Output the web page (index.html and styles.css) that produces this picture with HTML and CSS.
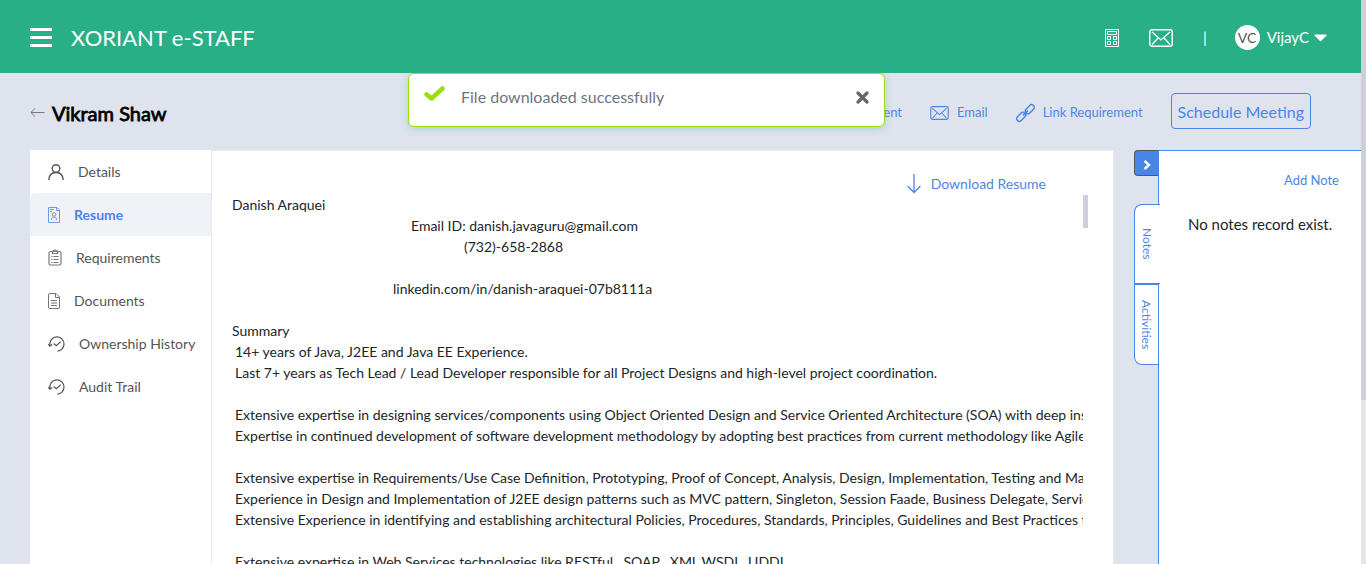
FILE: index.html
```html
<!DOCTYPE html>
<html lang="en">
<head>
<meta charset="utf-8">
<title>Xoriant e-Staff</title>
<link rel="stylesheet" href="styles.css">
</head>
<body>
<svg class="sprite" aria-hidden="true">
  <symbol id="mail" viewBox="0 0 24 18"><rect x=".8" y=".8" width="22.400" height="16.400" rx="2" fill="none" stroke="currentColor" stroke-width="1.400"/><path d="M3 3l9 8 9-8M3 15.500l6-6.500M21 15.500L15 9" fill="none" stroke="currentColor" stroke-width="1.300"/></symbol>
  <symbol id="history" viewBox="0 0 18 18"><path d="M2 11.500V8.500a7.500 7.500 0 1 1 8 8.500M.3 9.800l1.700 2 2.300-1.700M6 9l2.800 2.300L13.500 7" fill="none" stroke="currentColor" stroke-width="1.300"/></symbol>
</svg>
<div class="page">
  <header class="topbar">
    <button class="menu" aria-label="Menu"><span></span><span></span><span></span></button>
    <a class="brand" href="#">XORIANT e-STAFF</a>
    <nav class="tools">
      <button class="tool" aria-label="Calculator"><svg width="14" height="18" viewBox="0 0 14 18" fill="none" stroke="currentColor"><path d="M.5.500h13v17H.5zM2.500 2.500h9v3h-9zM2.500 7.500h3v3h-3zM8.500 7.500h3v3h-3zM2.500 12.500h3v3h-3zM8.500 12.500h3v3h-3z"/></svg></button>
      <button class="tool" aria-label="Messages"><svg width="24" height="18"><use href="#mail"/></svg></button>
      <span class="divider">|</span>
      <button class="user"><span class="avatar">VC</span><span>VijayC</span><svg width="13" height="8" viewBox="0 0 13 8"><path d="M1 .5h11q1 .2.5 1L7 7q-.5.500-1 0L.5 1.500Q0 .7 1 .5z" fill="currentColor"/></svg></button>
    </nav>
  </header>

  <div class="titlebar">
    <button class="back" aria-label="Back"><svg width="15" height="10" viewBox="0 0 15 10" fill="none" stroke="currentColor"><path d="M5 .5L.9 4.500 5 8.500M1 4.500h13.500"/></svg></button>
    <h1>Vikram Shaw</h1>
    <div class="actions">
      <a href="#">Comment</a>
      <a href="#"><svg width="19" height="14"><use href="#mail"/></svg>Email</a>
      <a href="#"><svg width="19" height="20" viewBox="0 0 20 20" fill="none" stroke="currentColor" stroke-width="1.500"><rect x="9" y="3.200" width="11" height="5.600" rx="2.800" transform="rotate(-45 14.500 6)"/><rect x="0" y="11.200" width="11" height="5.600" rx="2.800" transform="rotate(-45 5.500 14)"/><path d="M7.500 12.500l5-5"/></svg>Link Requirement</a>
      <button class="schedule">Schedule Meeting</button>
    </div>
  </div>

  <div class="content">
    <nav class="side">
      <a href="#"><svg width="16" height="16" viewBox="0 0 16 16" fill="none" stroke="currentColor" stroke-width="1.400"><circle cx="8" cy="4.500" r="3.800"/><path d="M.8 16C1 11 4 8.500 8 8.500s7 2.500 7.200 7.500"/></svg>Details</a>
      <a href="#" class="active"><svg class="soft" width="12" height="16" viewBox="0 0 12 16" fill="none" stroke="currentColor"><path d="M.5.500h8.500l2.500 2.500v12.500H.5zM8.500.500V3.500h3M2 2.500h4M2 4.500h2M3.500 13c0-2 .5-3 2.500-3s2.500 1 2.500 3"/><circle cx="6" cy="7.500" r="1.800"/></svg>Resume</a>
      <a href="#"><svg class="soft" width="14" height="17" viewBox="0 0 14 17" fill="none" stroke="currentColor" stroke-width="1.200"><rect x="1" y="2.500" width="12" height="13.500" rx="1.500"/><path d="M4.500 2h1.200q1.300-2.500 2.600 0h1.200v2.500h-5zM3.200 7.500h1.300M5.500 7.500h5M3.200 10.500h1.300M5.500 10.500h5M3.200 13.500h1.300M5.500 13.500h5"/></svg>Requirements</a>
      <a href="#"><svg class="soft" width="12" height="16" viewBox="0 0 12 16" fill="none" stroke="currentColor"><path d="M2 .5h6l3.500 3.500v10q0 1.500-1.500 1.500H2Q.5 15.500.5 14V2Q.5.500 2 .5zM7.500.500V4.500h4M3 7.500h6M3 10h6M3 12.500h6"/></svg>Documents</a>
      <a href="#"><svg width="17" height="17"><use href="#history"/></svg>Ownership History</a>
      <a href="#"><svg width="17" height="17"><use href="#history"/></svg>Audit Trail</a>
    </nav>

    <main class="resume">
      <a class="download" href="#"><svg width="14" height="20" viewBox="0 0 14 20" fill="none" stroke="currentColor" stroke-width="1.300"><path d="M7 0v18.500M.6 12L7 18.500 13.400 12"/></svg>Download Resume</a>
      <div class="viewer">
        <div class="doc">
          <p>Danish Araquei</p>
          <p class="mail-line">Email ID: danish.javaguru@gmail.com</p>
          <p class="phone-line">(732)-658-2868</p>
          <br>
          <p class="link-line">linkedin.com/in/danish-araquei-07b8111a</p>
          <br>
          <p>Summary</p>
          <div class="points">
            <p>14+ years of Java, J2EE and Java EE Experience.</p>
            <p>Last 7+ years as Tech Lead / Lead Developer responsible for all Project Designs and high-level project coordination.</p>
            <br>
            <p>Extensive expertise in designing services/components using Object Oriented Design and Service Oriented Architecture (SOA) with deep insight</p>
            <p>Expertise in continued development of software development methodology by adopting best practices from current methodology like Agile</p>
            <br>
            <p>Extensive expertise in Requirements/Use Case Definition, Prototyping, Proof of Concept, Analysis, Design, Implementation, Testing and Maintenance</p>
            <p>Experience in Design and Implementation of J2EE design patterns such as MVC pattern, Singleton, Session Faade, Business Delegate, Service</p>
            <p>Extensive Experience in identifying and establishing architectural Policies, Procedures, Standards, Principles, Guidelines and Best Practices for</p>
            <br>
            <p>Extensive expertise in Web Services technologies like RESTful , SOAP , XML,WSDL, UDDI.</p>
          </div>
        </div>
        <div class="thumb"></div>
      </div>
    </main>

    <div class="tabs">
      <button class="toggle" aria-label="Collapse panel"><svg width="8" height="10" viewBox="0 0 8 10" fill="none" stroke="currentColor" stroke-width="2.400"><path d="M1.500 1L6 5 1.500 9"/></svg></button>
      <button class="tab selected">Notes</button>
      <button class="tab">Activities</button>
    </div>
    <aside class="notes">
      <a href="#">Add Note</a>
      <p>No notes record exist.</p>
    </aside>
  </div>

  <div class="toast" role="status">
    <svg width="21" height="16" viewBox="0 0 21 16" fill="none" stroke="#9bdf0a" stroke-width="4.500" stroke-linecap="round" stroke-linejoin="round"><path d="M2.500 8.500L7.500 12.500 18.500 2.500"/></svg>
    <span>File downloaded successfully</span>
    <button aria-label="Close"><svg width="13" height="13" viewBox="0 0 13 13" stroke="currentColor" stroke-width="3.200" stroke-linecap="round"><path d="M2 2l9 9M11 2l-9 9"/></svg></button>
  </div>
</div>
<div class="scrollbar"><div></div></div>
</body>
</html>
```
FILE: styles.css
```css
* { box-sizing: border-box; }
body {
  margin: 0;
  height: 100vh;
  display: flex;
  overflow: hidden;
  background: #dfe3ee;
  color: #212529;
  font: 14px/21px Lato, sans-serif;
}
button { font: inherit; color: inherit; background: none; border: 0; padding: 0; }
a { color: inherit; text-decoration: none; }
p, h1 { margin: 0; }
svg { display: block; flex: none; }
.sprite { position: absolute; width: 0; height: 0; }
.page { position: relative; flex: 1; min-width: 0; display: flex; flex-direction: column; }
.scrollbar { width: 5px; background: #e5e5ee; }
.scrollbar div { height: 400px; background: #cecfdd; }

.topbar {
  height: 73px;
  flex: none;
  display: flex;
  align-items: center;
  padding: 2px 34px 0 30px;
  background: #29af86;
  color: #fff;
}
.menu { display: grid; gap: 5px; width: 22px; }
.menu span { height: 3px; background: #fff; }
.brand { margin-left: 19px; font-size: 22px; line-height: 30px; }
.tools { margin-left: auto; display: flex; align-items: center; }
.tool { margin-right: 30px; }
.divider { margin-right: 28px; font-size: 15px; }
.user { display: flex; align-items: center; gap: 7px; font-size: 15px; }
.user svg { margin-left: -2px; }
.avatar { width: 25px; height: 25px; border-radius: 50%; background: #fff; color: #555; line-height: 25px; font-size: 14px; }

.titlebar { height: 77px; flex: none; display: flex; align-items: center; padding: 2px 50px 0 30px; }
.back { color: #777; }
h1 { margin-left: 7px; font-size: 20px; font-weight: 400; line-height: 28px; color: #000; -webkit-text-stroke: 0.8px; }
.actions { margin-left: auto; display: flex; align-items: center; gap: 28px; color: #4a86e8; font-size: 13px; }
.actions a { display: flex; align-items: center; gap: 8px; }
.schedule { height: 36px; margin-bottom: 3px; padding: 0 6px; border: 1px solid #4a86e8; border-radius: 4px; font-size: 16px; }

.content { flex: 1; min-height: 0; display: flex; padding-left: 30px; }
.side { width: 181px; background: #fff; color: #555; }
.side a { height: 43px; display: flex; align-items: center; gap: 14px; padding-left: 18px; }
.side .active { background: #f1f2f8; color: #4a86e8; font-weight: bold; border-radius: 6px 0 0; }
.soft { opacity: .8; }

.resume {
  flex: 1;
  min-width: 0;
  display: flex;
  flex-direction: column;
  margin-right: 20px;
  padding: 22px 25px 0 20px;
  background: #fff;
  border: 1px solid #e8eaf1;
  border-bottom: 0;
}
.download { align-self: flex-end; display: flex; align-items: center; gap: 10px; height: 21px; margin-right: 42px; color: #4a86e8; }
.viewer { display: flex; min-height: 0; flex: 1; }
.doc { flex: 1; min-width: 0; overflow: hidden; white-space: nowrap; }
.thumb { width: 5px; height: 33px; margin-top: 1px; background: #cecfdd; }
.mail-line { padding-left: 179px; }
.phone-line { padding-left: 232px; }
.link-line { padding-left: 161px; }
.points { padding-left: 3px; }

.tabs { width: 24px; display: flex; flex-direction: column; }
.toggle { height: 26px; display: grid; place-items: center; margin-bottom: 28px; padding-top: 3px; background: #4a86e8; color: #fff; border: 1px solid #555; border-right: 0; border-radius: 4px 0 0 4px; }
.tab {
  height: 81px;
  background: #fff;
  border: 1px solid #4a86e8;
  border-right: 0;
  border-radius: 0 0 0 8px;
  color: #4a86e8;
  font-size: 12px;
  writing-mode: vertical-rl;
  text-align: center;
}
.tab.selected { position: relative; width: 26px; height: 80px; border-radius: 8px 0 0; }
.notes { width: 203px; padding: 19px 22px 0 29px; background: #fff; border: 1px solid #4a86e8; border-width: 1px 0 0 1px; }
.notes a { display: block; text-align: right; color: #4a86e8; font-size: 13px; }
.notes p { margin-top: 23px; font-size: 15px; white-space: nowrap; }

.toast {
  position: absolute;
  left: 408px;
  top: 73px;
  width: 477px;
  height: 54px;
  display: flex;
  align-items: flex-start;
  padding: 12px 15px 0 15px;
  background: #fff;
  border: 1px solid #9bdf0a;
  border-radius: 6px;
  box-shadow: 0 2px 8px rgba(41, 175, 134, .3);
  color: #6c757d;
  font-size: 16px;
}
.toast span { margin-left: 16px; }
.toast button { margin: 5px 0 0 auto; color: #666; }
```
